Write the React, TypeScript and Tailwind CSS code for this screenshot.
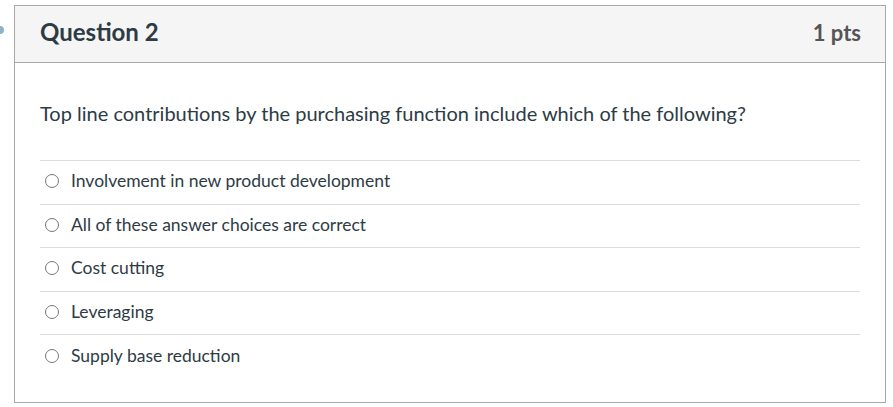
const answers = [
  "Involvement in new product development",
  "All of these answer choices are correct",
  "Cost cutting",
  "Leveraging",
  "Supply base reduction",
];

export default function App() {
  return (
    <div className="relative h-[407px] w-[893px] bg-white pl-[14px] pt-[5px] font-['Lato','Open_Sans',sans-serif] text-[#2d3b45]">
      <div className="absolute left-[-4px] top-[26px] h-[8px] w-[8px] rounded-full bg-[#8fb1c9]" />
      <div className="h-[398px] w-[872px] border border-[#a9a9a9]">
        <div className="flex h-[57px] items-center justify-between border-b border-[#a9a9a9] bg-[#f5f5f5] pb-[4px] pl-[25px] pr-[24px]">
          <h2 className="text-[24px] font-bold">Question 2</h2>
          <span className="text-[22px] font-bold text-[#555]">1 pts</span>
        </div>
        <div className="px-[25px] pt-[37px]">
          <p className="text-[20px] leading-[26px]">
            Top line contributions by the purchasing function include which of the following?
          </p>
          <div className="mt-[34px] border-t border-[#dcdcdc]">
            {answers.map((a) => (
              <label key={a} className="flex h-[43.5px] items-center border-b border-[#dcdcdc] pb-[2px] pl-[5px] last:border-b-0">
                <span className="h-[14px] w-[14px] rounded-full border border-[#777] bg-white" />
                <span className="ml-[12px] text-[17.5px]">{a}</span>
              </label>
            ))}
          </div>
        </div>
      </div>
    </div>
  );
}
